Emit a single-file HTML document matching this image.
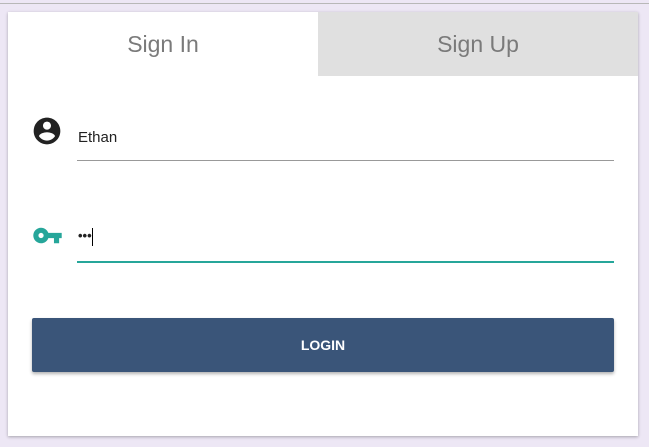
<!DOCTYPE html>
<html><head><style>
body{margin:0;width:649px;height:447px;background:#ede7f5;position:relative;overflow:hidden;font-family:"Liberation Sans",sans-serif}
.top{position:absolute;left:0;top:3px;width:649px;height:1px;background:#b8b8b8}
.card{position:absolute;left:8px;top:12px;width:630px;height:424px;background:#fff;box-shadow:0 1px 3px rgba(0,0,0,.3)}
.tab{position:absolute;top:0;height:64px;line-height:64px;text-align:center;font-size:23px;color:#7a7a7a}
.t1{left:0;width:310px}
.t2{left:310px;width:320px;background:#e0e0e0}
.line{position:absolute;left:69px;width:537px}
.txt{position:absolute;left:70px;font-size:15px;color:#222}
.btn{position:absolute;left:24px;top:306px;width:582px;height:54px;background:#3a5579;border-radius:2px;box-shadow:0 2px 3px rgba(0,0,0,.3);color:#fff;font-weight:bold;font-size:14px;line-height:54px;text-align:center}
</style></head><body>
<div class="top"></div>
<div class="card">
<div class="tab t1">Sign In</div>
<div class="tab t2">Sign Up</div>
<svg style="position:absolute;left:23px;top:103px" width="32" height="32" viewBox="0 0 24 24"><path fill="#222" d="M12 2C6.48 2 2 6.48 2 12s4.48 10 10 10 10-4.48 10-10S17.52 2 12 2zm0 3c1.66 0 3 1.34 3 3s-1.34 3-3 3-3-1.34-3-3 1.34-3 3-3zm0 14.2c-2.5 0-4.71-1.28-6-3.22.03-1.99 4-3.08 6-3.08 1.99 0 5.97 1.09 6 3.08-1.29 1.94-3.5 3.22-6 3.22z"/></svg>
<div class="txt" style="top:117px">Ethan</div>
<div class="line" style="top:148px;height:1px;background:#999"></div>
<svg style="position:absolute;left:24px;top:208px" width="31" height="31" viewBox="0 0 24 24"><path fill="#26a69a" d="M12.65 10C11.83 7.67 9.61 6 7 6c-3.31 0-6 2.69-6 6s2.690 6 6 6c2.61 0 4.83-1.67 5.65-4H17v4h4v-4h2v-4H12.65zM7 14c-1.1 0-2-.9-2-2s.9-2 2-2 2 .9 2 2-.9 2-2 2z"/></svg>
<div class="txt" style="top:216px;font-weight:bold;font-size:13px;letter-spacing:0">•••</div>
<div style="position:absolute;left:84px;top:216px;width:1px;height:18px;background:#000"></div>
<div class="line" style="top:249px;height:2px;background:#26a69a"></div>
<div class="btn">LOGIN</div>
</div>
</body></html>
